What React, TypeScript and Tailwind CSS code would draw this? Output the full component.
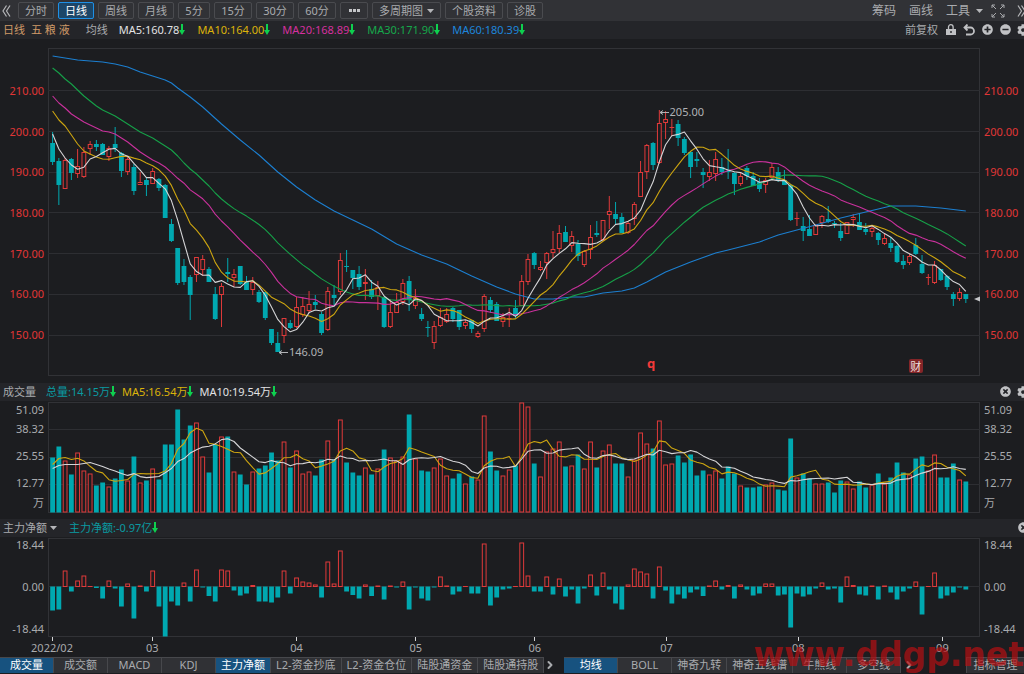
import { useState, type ReactNode } from 'react';
import clsx from 'clsx';
import { FaCog, FaMinusCircle, FaPlusCircle, FaTimesCircle } from 'react-icons/fa';
import { ChevronRight } from 'lucide-react';

// [rising, high, body top, body bottom, low] on the price plot's vertical scale
type Candle = [0 | 1, number, number, number, number];

const CANDLES: Candle[] = [
  [0, 132, 143, 162, 165], [0, 158, 161, 185, 205], [1, 158, 160, 189, 189], [0, 158, 159, 173, 180],
  [1, 149, 166, 174, 178], [1, 147, 152, 177, 178], [1, 141, 144, 149, 155], [0, 140, 144, 147, 151],
  [0, 143, 144, 155, 155], [1, 146, 148, 157, 161], [0, 127, 144, 148, 152], [0, 152, 153, 171, 177],
  [1, 156, 159, 172, 175], [0, 164, 167, 191, 195], [1, 172, 182, 185, 185], [0, 178, 180, 185, 196],
  [1, 168, 171, 184, 184], [0, 178, 179, 188, 191], [0, 184, 185, 218, 218], [0, 219, 224, 241, 242],
  [0, 248, 248, 283, 285], [0, 259, 266, 282, 285], [0, 275, 277, 295, 320], [1, 257, 257, 275, 282],
  [1, 255, 259, 270, 276], [0, 267, 269, 282, 282], [0, 287, 294, 319, 320], [1, 283, 286, 295, 327],
  [0, 258, 272, 274, 282], [1, 269, 274, 278, 287], [0, 266, 266, 284, 285], [0, 276, 282, 290, 290],
  [1, 277, 282, 290, 295], [0, 290, 292, 302, 303], [0, 292, 292, 318, 320], [0, 329, 329, 343, 345],
  [0, 332, 343, 352, 352], [1, 318, 318, 336, 343], [0, 320, 323, 328, 329], [1, 297, 307, 327, 328],
  [1, 297, 306, 315, 317], [1, 291, 304, 311, 313], [0, 295, 302, 305, 309], [0, 312, 314, 333, 335],
  [1, 287, 291, 330, 331], [0, 285, 295, 298, 306], [1, 253, 260, 292, 295], [0, 250, 266, 267, 272],
  [0, 270, 270, 278, 289], [0, 266, 274, 287, 290], [1, 269, 282, 284, 300], [0, 280, 289, 297, 299],
  [1, 281, 287, 296, 310], [0, 297, 297, 327, 328], [1, 299, 312, 327, 328], [1, 293, 302, 313, 313],
  [1, 279, 283, 302, 305], [0, 276, 281, 300, 311], [1, 289, 298, 306, 309], [0, 308, 314, 319, 321],
  [0, 321, 327, 328, 337], [1, 321, 326, 343, 349], [1, 308, 317, 326, 327], [1, 308, 314, 322, 323],
  [0, 307, 308, 319, 322], [0, 310, 310, 327, 330], [1, 320, 322, 326, 329], [0, 320, 320, 329, 333],
  [1, 331, 333, 337, 338], [1, 294, 296, 329, 332], [0, 297, 300, 310, 313], [0, 302, 304, 321, 321],
  [1, 313, 317, 322, 327], [1, 308, 318, 319, 327], [0, 300, 308, 316, 318], [1, 275, 281, 306, 306],
  [1, 254, 259, 282, 285], [0, 252, 253, 265, 269], [1, 261, 267, 270, 271], [1, 252, 253, 263, 279],
  [1, 231, 249, 253, 258], [1, 225, 233, 249, 253], [0, 226, 232, 242, 242], [1, 231, 236, 246, 252],
  [0, 240, 244, 256, 261], [1, 250, 251, 265, 267], [1, 225, 237, 250, 259], [0, 221, 233, 235, 237],
  [1, 220, 220, 240, 241], [1, 196, 211, 215, 229], [0, 202, 214, 219, 224], [0, 213, 217, 233, 233],
  [1, 221, 223, 233, 234], [1, 202, 204, 219, 225], [1, 161, 172, 197, 197], [1, 144, 145, 172, 179],
  [0, 142, 143, 165, 170], [1, 110, 123, 163, 164], [1, 111, 119, 123, 139], [1, 119, 127, 128, 136],
  [0, 120, 124, 138, 146], [0, 137, 139, 153, 155], [0, 151, 152, 167, 178], [0, 152, 159, 161, 167],
  [0, 168, 172, 175, 188], [1, 160, 172, 177, 181], [1, 152, 159, 174, 181], [0, 158, 167, 172, 175],
  [0, 149, 171, 172, 179], [0, 172, 173, 184, 195], [1, 173, 176, 184, 186], [0, 166, 168, 176, 180],
  [0, 172, 176, 186, 186], [0, 178, 182, 189, 192], [1, 178, 180, 185, 193], [1, 163, 167, 178, 179],
  [0, 167, 172, 181, 182], [0, 170, 180, 185, 185], [0, 184, 185, 220, 221], [1, 212, 218, 219, 226],
  [0, 217, 226, 231, 241], [0, 215, 229, 236, 236], [1, 224, 225, 235, 235], [1, 215, 216, 223, 228],
  [0, 206, 219, 222, 223], [0, 221, 223, 224, 228], [0, 223, 231, 238, 241], [1, 222, 222, 234, 234],
  [1, 214, 217, 220, 227], [0, 213, 222, 230, 230], [0, 223, 229, 232, 235], [1, 225, 228, 232, 237],
  [0, 232, 233, 240, 245], [1, 233, 238, 244, 245], [0, 237, 243, 248, 252], [0, 245, 246, 262, 263],
  [0, 255, 261, 265, 269], [1, 254, 256, 263, 265], [0, 238, 245, 254, 255], [0, 255, 264, 273, 274],
  [1, 274, 277, 278, 285], [1, 261, 265, 283, 284], [0, 269, 269, 280, 281], [0, 275, 276, 287, 290],
  [0, 292, 294, 299, 306], [1, 288, 292, 299, 301], [0, 294, 294, 299, 303],
];

const VOLUMES = [
  55, 66, 52, 38, 60, 42, 39, 27, 30, 26, 34, 43, 32, 56, 30, 32, 44, 33, 68, 68, 103, 73, 87, 90, 56,
  40, 68, 76, 76, 41, 38, 28, 41, 44, 47, 60, 52, 71, 45, 62, 39, 41, 37, 53, 72, 53, 93, 50, 40, 37,
  45, 38, 44, 63, 55, 52, 56, 98, 54, 42, 41, 45, 54, 37, 34, 39, 29, 36, 33, 97, 61, 42, 37, 43, 47,
  110, 106, 49, 36, 61, 64, 71, 46, 47, 58, 44, 71, 45, 62, 68, 49, 49, 36, 53, 80, 69, 64, 92, 48, 49,
  57, 50, 58, 37, 42, 38, 42, 34, 46, 39, 27, 25, 25, 26, 28, 30, 23, 22, 74, 35, 39, 34, 29, 29, 30,
  20, 32, 31, 24, 31, 25, 28, 39, 29, 35, 50, 40, 38, 54, 56, 42, 58, 35, 35, 49, 33, 31,
];

const NET_FLOW = [
  -24, -23, 16, -5, 6, 11, 0.5, -1.5, -12, 6, -2, -20, 3, -32, 1, -5, 16, -20, -50, -15, -19, 4, -15, 17,
  -1, -9.5, -15, 17, 16, -4, -9, -7, 1.5, -15, -15, -16, -11, 16, -7, 9, 5, 4, 2, -11, 25, 3, 36, -5,
  -8.5, -12, 2, -9.5, 1, -13, 1, -1, 5, -23, -0.5, -12, -14, -0.5, 10, 1, -8, -5, 0.5, -7, -7, 43, -19,
  -11, -3, -2, 0.5, 44, 11, -5, -5, 10, -8, 8, -10, -3, -17, -2, 12, -9, 14, -3, -17, -23, 2, 18, 15, 13,
  -12, 20, -4, -17, -8, -12, -6, -3, -9.5, 1, 6, -3, 1.5, -12, 2, -3, -9, -7, 3, 3, -9, -8, -41, -7, -10,
  -8, -2, 4, -3, -2, -16, 10, 1.5, -8, -9, 1, -13, 1, -6, -13, -5, -2, 5, -28, 0.5, 14, -12, -9, -6,
  -0.5, -3,
];

// values for the days whose averaging window starts before the first candle
const LEAD_MA5 = [134, 149, 158, 165];
const LEAD_MA10 = [111, 120, 126, 135, 144, 151, 154, 157, 159];
const LEAD_MA20 = [96, 103, 108, 114, 118, 122, 125, 128, 131, 132, 134, 138, 142, 147, 152, 156, 160, 163, 167];
const LEAD_MA30 = [
  68, 73, 79, 84, 90, 96, 101, 106, 110, 113, 116, 120, 124, 128, 132, 135, 138, 142, 146, 150, 156, 163,
  169, 174, 180, 186, 193, 199, 204,
];
const LEAD_VOL5 = [48, 54, 55, 53];
const LEAD_VOL10 = [44, 47, 48, 48, 48, 49, 50, 48, 46];

const MA60: [number, number][] = [
  [0, 56], [2, 58], [4, 60], [6, 61], [8, 62], [10, 64], [12, 67], [14, 72], [16, 76], [18, 80], [19, 83],
  [20, 88], [22, 97], [24, 107], [27, 124], [30, 140], [33, 155], [36, 172], [39, 187], [42, 200],
  [45, 211], [48, 220], [51, 229], [55, 244], [59, 255], [63, 264], [67, 276], [71, 287], [74, 294],
  [77, 299], [80, 299], [83, 297], [85, 297], [88, 293], [91, 291], [93, 288], [95, 282], [98, 272],
  [102, 262], [106, 253], [108, 250], [113, 242], [116, 235], [119, 230], [122, 225], [126, 218],
  [130, 212], [134, 206], [138, 206], [142, 208], [146, 211],
];

const MONTHS = [
  { label: '2022/02', days: 16 },
  { label: '03', days: 23 },
  { label: '04', days: 19 },
  { label: '05', days: 19 },
  { label: '06', days: 21 },
  { label: '07', days: 21 },
  { label: '08', days: 23 },
  { label: '09', days: 6 },
];

const PRICES = ['210.00', '200.00', '190.00', '180.00', '170.00', '160.00', '150.00'];

const UP = '#e03a3a';
const DOWN = '#00a8b0';
const GRID = '#2d2e32';
const PLOT_WIDTH = 932;

const xAt = (i: number) => 4.6 + i * 6.255;

function rolling(values: number[], n: number, lead: number[]) {
  return values.map((_, i) =>
    i < n - 1 ? lead[i] : values.slice(i - n + 1, i + 1).reduce((a, b) => a + b, 0) / n
  );
}

const toPoints = (ys: number[]) => ys.map((y, i) => `${xAt(i).toFixed(1)},${y.toFixed(1)}`).join(' ');

function Line({ points, color }: { points: string; color: string }) {
  return <polyline points={points} fill="none" stroke={color} strokeWidth="1.1" strokeLinejoin="round" />;
}

function Bar({ i, top, bottom, rising }: { i: number; top: number; bottom: number; rising: boolean }) {
  const h = bottom - top;
  if (rising && h > 2) {
    return <rect x={xAt(i) - 1.9} y={top + 0.5} width="3.8" height={h - 1} fill="#1c1d20" stroke={UP} />;
  }
  return <rect x={xAt(i) - 2.4} y={top} width="4.8" height={Math.max(h, 1)} fill={rising ? UP : DOWN} />;
}

function Plot({ top, height, grid, className, children }: {
  top: number;
  height: number;
  grid: number[];
  className: string;
  children: ReactNode;
}) {
  return (
    <svg
      viewBox={`0 ${top} ${PLOT_WIDTH} ${height}`}
      preserveAspectRatio="none"
      className={clsx('block w-full', className)}
    >
      <rect x="0.5" y={top + 0.5} width={PLOT_WIDTH - 1} height={height - 1} fill="none" stroke="#313236" />
      {grid.map(y => (
        <line key={y} x1="0" x2={PLOT_WIDTH} y1={y} y2={y} stroke={GRID} />
      ))}
      {children}
    </svg>
  );
}

function PricePlot() {
  const closes = CANDLES.map(([rising, , t, b]) => (rising ? t : b));
  return (
    <Plot top={48} height={328} grid={[90.5, 131.5, 172.5, 212.5, 253.5, 294.5, 335.5]} className="h-[328px]">
      {CANDLES.map(([rising, high, t, b, low], i) => (
        <g key={i}>
          <line x1={xAt(i)} x2={xAt(i)} y1={high} y2={low} stroke={rising ? UP : DOWN} />
          <Bar i={i} top={t} bottom={b} rising={rising === 1} />
        </g>
      ))}
      <Line points={MA60.map(([i, y]) => `${xAt(i)},${y}`).join(' ')} color="#1c7fd0" />
      <Line points={toPoints(rolling(closes, 30, LEAD_MA30))} color="#16a048" />
      <Line points={toPoints(rolling(closes, 20, LEAD_MA20))} color="#c9319c" />
      <Line points={toPoints(rolling(closes, 10, LEAD_MA10))} color="#cda510" />
      <Line points={toPoints(rolling(closes, 5, LEAD_MA5))} color="#d5d5d7" />
      <path d="M612 112.500h9M615 110.500l-3 2 3 2M231 352.500h9M234 350.500l-3 2 3 2" fill="none" stroke="#b0b2b5" />
      <path d="M926 299l6-2.500v5z" fill="#c4c5c8" />
    </Plot>
  );
}

function VolumePlot() {
  const base = 512.5;
  return (
    <Plot top={402} height={111} grid={[429.5, 457.5, 484.5]} className="h-[111px]">
      {VOLUMES.map((v, i) => (
        <Bar key={i} i={i} top={base - v} bottom={base} rising={CANDLES[i][0] === 1} />
      ))}
      <Line points={toPoints(rolling(VOLUMES, 5, LEAD_VOL5).map(v => base - v))} color="#cda510" />
      <Line points={toPoints(rolling(VOLUMES, 10, LEAD_VOL10).map(v => base - v))} color="#d5d5d7" />
    </Plot>
  );
}

function NetFlowPlot() {
  const zero = 586.5;
  return (
    <Plot top={538} height={99} grid={[zero]} className="h-[99px]">
      {NET_FLOW.map((v, i) => (
        <Bar key={i} i={i} top={v > 0 ? zero - v : zero} bottom={v > 0 ? zero + 0.5 : zero - v} rising={v > 0} />
      ))}
    </Plot>
  );
}

function PriceAxis({ className }: { className: string }) {
  return (
    <div className={clsx('shrink-0 pt-[22px] text-[#e03636]', className)}>
      <div className="grid h-[285px] grid-rows-7 items-center">
        {PRICES.map(p => <span key={p}>{p}</span>)}
      </div>
    </div>
  );
}

function VolumeAxis({ className }: { className: string }) {
  return (
    <div className={clsx('flex shrink-0 flex-col', className)}>
      <span className="leading-[15px]">51.09</span>
      <span className="leading-6">38.32</span>
      <span className="leading-[30px]">25.55</span>
      <span className="leading-6">12.77</span>
      <span className="leading-4">万</span>
    </div>
  );
}

function NetFlowAxis({ className }: { className: string }) {
  return (
    <div className={clsx('-mt-px mb-px flex shrink-0 flex-col justify-between', className)}>
      <span>18.44</span>
      <span>0.00</span>
      <span>-18.44</span>
    </div>
  );
}

const LEFT_AXIS = 'w-12 pr-1 text-right';
const RIGHT_AXIS = 'w-11 pl-1';

function DownArrow() {
  return (
    <svg viewBox="0 0 6 11" className="h-[11px] w-[6px]" fill="#0ed04f">
      <path d="M2 0h2v6h2L3 11 0 6h2z" />
    </svg>
  );
}

function Caret() {
  return (
    <svg viewBox="0 0 7 4" className="pointer-events-none h-1 w-[7px]" fill="#b5b6b9">
      <path d="M0 0h7L3.500 4z" />
    </svg>
  );
}

function DoubleChevron({ className }: { className?: string }) {
  return (
    <svg viewBox="0 0 9 12" className={clsx('h-3 w-[9px]', className)} fill="none" stroke="#b5b6b9" strokeWidth="1.200">
      <path d="M4.500 0.500L1 6l3.500 5.500M8 0.500L4.500 6 8 11.500" />
    </svg>
  );
}

function Indicator({ text, className }: { text: string; className: string }) {
  return (
    <span className={clsx('flex items-center', className)}>
      {text}
      <DownArrow />
    </span>
  );
}

function IconButton({ label, children }: { label: string; children: ReactNode }) {
  return (
    <button aria-label={label} className="flex w-[18px] shrink-0 justify-center text-[#c0c1c4]">
      {children}
    </button>
  );
}

const PERIODS = [
  { label: '分时', width: 'min-w-9' },
  { label: '日线', width: 'min-w-9' },
  { label: '周线', width: 'min-w-9' },
  { label: '月线', width: 'min-w-9' },
  { label: '5分', width: 'min-w-8' },
  { label: '15分', width: 'min-w-[38px]' },
  { label: '30分', width: 'min-w-[38px]' },
  { label: '60分', width: 'min-w-[38px]' },
];

const TOOL_BOX = 'flex h-[17px] items-center justify-center rounded-[2px] border border-[#4a4b4f] px-[6px]';

function Toolbar() {
  const [period, setPeriod] = useState('日线');
  return (
    <div className="flex h-[21px] items-center bg-[#313236]">
      <button aria-label="收起" className="flex w-[18px] shrink-0 items-center pl-[2px]">
        <DoubleChevron />
      </button>
      <div className="flex shrink-0 gap-1">
        {PERIODS.map(p => (
          <button
            key={p.label}
            onClick={() => setPeriod(p.label)}
            className={clsx(
              'flex h-[17px] items-center justify-center rounded-[2px] border px-[6px]',
              p.width,
              p.label === period ? 'border-[#1e90e6] bg-[#1c4668] text-white' : 'border-[#4a4b4f]'
            )}
          >
            {p.label}
          </button>
        ))}
        <button aria-label="更多周期" className={clsx(TOOL_BOX, 'w-7 gap-px')}>
          <i className="h-[3px] w-[3px] bg-[#c4c5c8]" />
          <i className="h-[3px] w-[3px] bg-[#c4c5c8]" />
          <i className="h-[3px] w-[3px] bg-[#c4c5c8]" />
        </button>
        <label className={clsx(TOOL_BOX, 'gap-[4px]')}>
          <select aria-label="多周期图" className="w-11 appearance-none bg-transparent">
            <option>多周期图</option>
          </select>
          <Caret />
        </label>
        <button className={TOOL_BOX}>个股资料</button>
        <button className={TOOL_BOX}>诊股</button>
      </div>
      <div className="ml-auto -mr-[2px] flex shrink-0 items-center text-[12px]">
        <button className="mr-[13px]">筹码</button>
        <button className="mr-[13px]">画线</button>
        <label className="mr-2 flex items-center gap-[6px]">
          <select aria-label="工具" className="w-6 appearance-none bg-transparent">
            <option>工具</option>
          </select>
          <Caret />
        </label>
        <button aria-label="全屏" className="mr-3">
          <svg viewBox="0 0 14 14" className="h-[14px] w-[14px]" fill="none" stroke="#a9aaad">
            <path d="M1 4V1h3M1 1l4 4M10 1h3v3M13 1L9 5M1 10v3h3M1 13l4-4M10 13h3v-3M13 13L9 9" />
          </svg>
        </button>
        <button aria-label="展开">
          <DoubleChevron className="rotate-180" />
        </button>
      </div>
    </div>
  );
}

const HEADER = 'flex h-[18px] items-center overflow-hidden bg-[#242529] pb-px pl-[3px]';

function AverageBar() {
  return (
    <div className={HEADER}>
      <span className="mr-[6px] text-[#cf9a68]">日线</span>
      <span className="mr-4 text-[#cf9a68]">五 粮 液</span>
      <span className="mr-[11px]">均线</span>
      <div className="flex gap-3">
        <Indicator text="MA5:160.78" className="text-[#e2e2e4]" />
        <Indicator text="MA10:164.00" className="text-[#dcb30a]" />
        <Indicator text="MA20:168.89" className="text-[#d6309f]" />
        <Indicator text="MA30:171.90" className="text-[#16a84b]" />
        <Indicator text="MA60:180.39" className="text-[#1d86dc]" />
      </div>
      <div className="ml-auto -mr-2 flex shrink-0 items-center">
        <button className="mr-1">前复权</button>
        <IconButton label="锁定">
          <svg viewBox="0 0 10 11" className="h-[11px] w-[10px]">
            <path d="M2.500 5V3a2.300 2.300 0 0 1 4.600 0V5" fill="none" stroke="currentColor" strokeWidth="1.300" />
            <path d="M0 5h10v6H0zM4.300 7v2h1.400V7z" fill="currentColor" fillRule="evenodd" />
          </svg>
        </IconButton>
        <IconButton label="撤销">
          <svg viewBox="0 0 12 12" className="h-3 w-3" fill="none" stroke="currentColor" strokeWidth="1.800">
            <path d="M4.500 0.500L1.500 3.500l3 3M1.500 3.500H7.500a3.500 3.500 0 0 1 0 7H3" />
          </svg>
        </IconButton>
        <IconButton label="放大"><FaPlusCircle className="h-[11px] w-[11px]" /></IconButton>
        <IconButton label="缩小"><FaMinusCircle className="h-[11px] w-[11px]" /></IconButton>
        <IconButton label="设置"><FaCog className="h-3 w-3" /></IconButton>
      </div>
    </div>
  );
}

// Labels that sit on top of the price plot
function PriceNotes() {
  const left = (i: number) => ({ left: `${(xAt(i) / PLOT_WIDTH) * 100}%` });
  return (
    <>
      <span className="absolute top-14 pl-1 text-[#b0b2b5]" style={left(98)}>205.00</span>
      <span className="absolute top-[296px] pl-2 text-[#b0b2b5]" style={left(36.5)}>146.09</span>
      <b className="absolute top-[308px] -translate-x-1/2 text-[13px] text-[#f23a3a]" style={left(95.7)}>q</b>
      <span
        className="absolute top-[311px] flex h-[14px] w-[14px] -translate-x-1/2 items-center justify-center rounded-[2px] bg-[#842528] text-[#f0e0e0]"
        style={left(138)}
      >
        财
      </span>
    </>
  );
}

function TimeAxis() {
  return (
    <div className="flex h-5 pr-11 pl-[52px] leading-[13px]">
      {MONTHS.map(m => (
        <div key={m.label} className="min-w-0 basis-0" style={{ flexGrow: m.days }}>
          <div className="flex w-0 flex-col items-center whitespace-nowrap">
            <i className="h-1 w-px bg-[#d5d5d7]" />
            {m.label}
          </div>
        </div>
      ))}
    </div>
  );
}

function Tabs({ names, active, onSelect }: {
  names: string[];
  active: string[];
  onSelect: (name: string) => void;
}) {
  return (
    <div className="flex shrink-0">
      {names.map(name => (
        <button
          key={name}
          onClick={() => onSelect(name)}
          className={clsx(
            'flex h-4 min-w-[54px] justify-center border-t border-r border-[#47484c] px-[5px] leading-[13px] whitespace-nowrap',
            active.includes(name) ? 'bg-[#17527f] text-white' : 'bg-[#303135]'
          )}
        >
          {name}
        </button>
      ))}
    </div>
  );
}

const PANES = ['成交量', '成交额', 'MACD', 'KDJ', '主力净额', 'L2-资金抄底', 'L2-资金仓位', '陆股通资金', '陆股通持股'];
const OVERLAYS = ['均线', 'BOLL', '神奇九转', '神奇五线谱', '牛熊线', '多空线'];

function BottomBar() {
  const [panes, setPanes] = useState(['成交量', '主力净额']);
  const [overlay, setOverlay] = useState('均线');
  return (
    <div className="relative flex h-[17px]">
      <Tabs names={PANES} active={panes} onSelect={name => setPanes([panes[0], name])} />
      <button aria-label="更多指标" className="flex h-4 w-5 items-center justify-center pr-2">
        <ChevronRight className="h-3 w-3 shrink-0" strokeWidth={4} />
      </button>
      <Tabs names={OVERLAYS} active={[overlay]} onSelect={setOverlay} />
      <button aria-label="更多均线" className="flex h-4 w-4 items-center justify-center">
        <ChevronRight className="h-3 w-3 shrink-0" strokeWidth={4} />
      </button>
      <button className="ml-auto flex h-4 w-[58px] justify-center border-t border-l border-[#47484c] bg-[#303135] leading-[13px]">
        指标管理
      </button>
      <span className="pointer-events-none absolute right-0 bottom-0 font-['DejaVu_Sans'] text-[33px] leading-[38px] font-bold text-[#b80f12]/70">
        www.ddgp.net
      </span>
    </div>
  );
}

export default function App() {
  return (
    <main className="min-h-screen overflow-hidden bg-[#1c1d20] font-['Noto_Sans','Noto_Sans_CJK_SC',sans-serif] text-[11px] leading-[15px] text-[#a9abae]">
      <Toolbar />
      <AverageBar />

      <section className="mt-[9px] flex">
        <PriceAxis className={LEFT_AXIS} />
        <div className="relative min-w-0 flex-1">
          <PricePlot />
          <PriceNotes />
        </div>
        <PriceAxis className={RIGHT_AXIS} />
      </section>

      <div className={clsx(HEADER, 'mt-[7px]')}>
        <span className="mr-[10px]">成交量</span>
        <div className="flex gap-[6px]">
          <Indicator text="总量:14.15万" className="text-[#0a9aa1]" />
          <Indicator text="MA5:16.54万" className="text-[#dcb30a]" />
          <Indicator text="MA10:19.54万" className="text-[#e2e2e4]" />
        </div>
        <div className="ml-auto -mr-2 flex">
          <IconButton label="关闭"><FaTimesCircle className="h-[11px] w-[11px]" /></IconButton>
          <IconButton label="设置"><FaCog className="h-3 w-3" /></IconButton>
        </div>
      </div>
      <section className="mt-px flex">
        <VolumeAxis className={LEFT_AXIS} />
        <div className="min-w-0 flex-1"><VolumePlot /></div>
        <VolumeAxis className={RIGHT_AXIS} />
      </section>

      <div className={clsx(HEADER, 'mt-[6px]')}>
        <label className="mr-3 flex items-center gap-[3px]">
          <select aria-label="指标" className="w-11 appearance-none bg-transparent">
            <option>主力净额</option>
          </select>
          <Caret />
        </label>
        <Indicator text="主力净额:-0.97亿" className="text-[#0a9aa1]" />
        <div className="ml-auto -mr-2 flex">
          <IconButton label="关闭"><FaTimesCircle className="h-[11px] w-[11px]" /></IconButton>
        </div>
      </div>
      <section className="mt-px flex">
        <NetFlowAxis className={LEFT_AXIS} />
        <div className="min-w-0 flex-1"><NetFlowPlot /></div>
        <NetFlowAxis className={RIGHT_AXIS} />
      </section>

      <TimeAxis />
      <BottomBar />
    </main>
  );
}
